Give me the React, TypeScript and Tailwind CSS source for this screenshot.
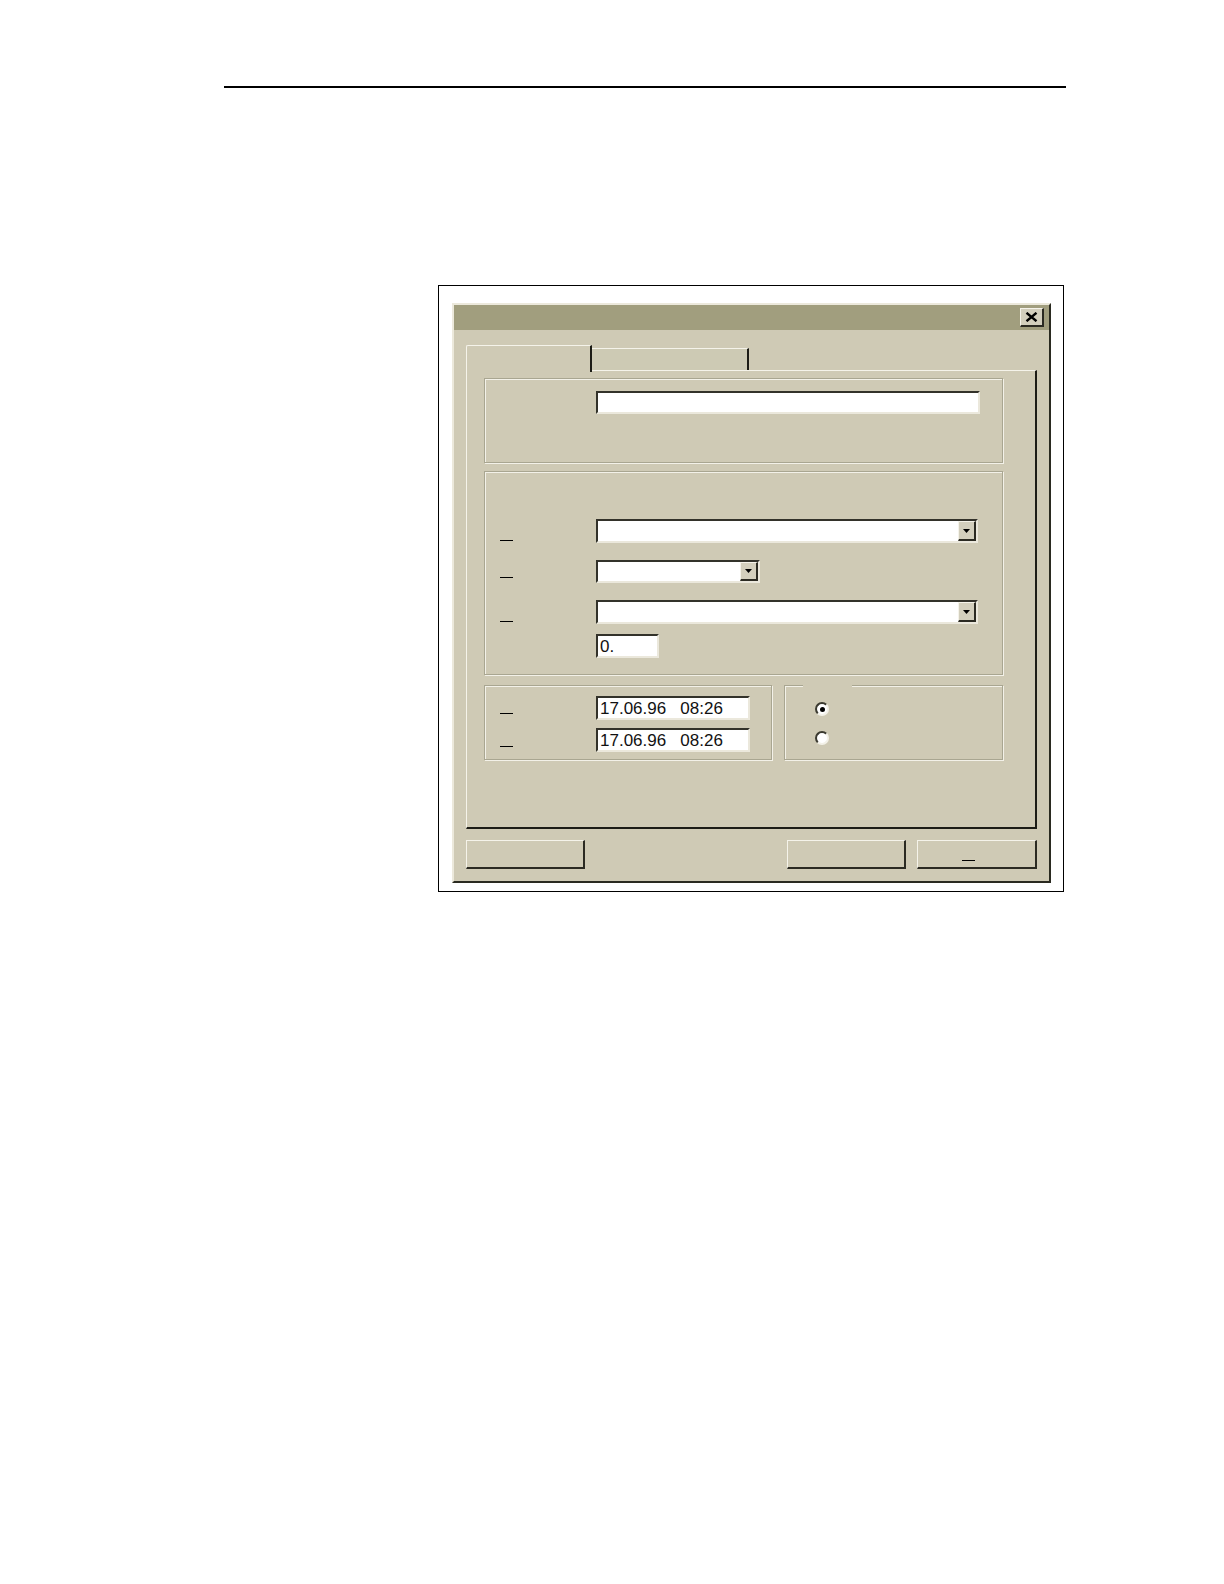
import React from "react";

const sunken =
  "bg-white border-2 border-t-[#33322a] border-l-[#33322a] border-b-[#ebe8dc] border-r-[#ebe8dc]";
const raised =
  "border-t border-l border-t-[#f5f3ea] border-l-[#f5f3ea] border-r-2 border-b-2 border-r-[#2b2a22] border-b-[#2b2a22]";
const etched =
  "border border-[#a9a691] shadow-[inset_1px_1px_0_#f3f1e8,1px_1px_0_#f3f1e8]";

function Underscore() {
  return <div className="w-[13px] h-[1px] bg-black" />;
}

function Combo({ w, h }: { w: string; h: string }) {
  return (
    <div className={`${sunken} ${w} ${h} flex justify-end`}>
      <div
        className={`w-[18px] h-full bg-[#d3cfbd] ${raised} flex items-center justify-center`}
      >
        <svg width="7" height="4" viewBox="0 0 7 4">
          <path d="M0 0H7L3.5 4Z" fill="#000" />
        </svg>
      </div>
    </div>
  );
}

function Field({ w, h, text }: { w: string; h: string; text?: string }) {
  return (
    <div
      className={`${sunken} ${w} ${h} flex items-center pl-[2px] pt-[1px] text-[17px] leading-none text-[#111] whitespace-pre`}
    >
      {text}
    </div>
  );
}

function Radio({ checked }: { checked?: boolean }) {
  return (
    <div className="w-[14px] h-[14px] rounded-full bg-white border-2 border-t-[#3a392f] border-l-[#3a392f] border-b-[#f3f1e8] border-r-[#f3f1e8] flex items-center justify-center">
      {checked && <div className="w-[5px] h-[5px] rounded-full bg-black" />}
    </div>
  );
}

export default function App() {
  return (
    <div
      className="w-[1224px] h-[1584px] bg-white overflow-hidden"
      style={{ fontFamily: '"Liberation Sans", Arial, sans-serif' }}
    >
      <div className="pt-[86px] pl-[224px]">
        <div className="w-[842px] h-[2px] bg-black" />
      </div>

      <div className="ml-[438px] mt-[197px] w-[626px] h-[607px] border border-black pl-[13px] pt-[17px]">
        {/* dialog */}
        <div className="w-[599px] h-[580px] bg-[#cfcab5] border-2 border-t-[#ece9dc] border-l-[#ece9dc] border-r-[#2a2a20] border-b-[#2a2a20] flex flex-col">
          {/* title bar */}
          <div className="h-[25px] bg-[#a19e7e] flex items-center justify-end pr-[5px]">
            <div
              className={`w-[24px] h-[19px] bg-[#d3cfbd] ${raised} flex items-center justify-center`}
            >
              <svg width="13" height="10" viewBox="0 0 13 10">
                <path
                  d="M1.5 0.8L11.5 9.2M11.5 0.8L1.5 9.2"
                  stroke="#000"
                  strokeWidth="2.4"
                />
              </svg>
            </div>
          </div>

          <div className="px-[12px] pt-[15px] flex flex-col">
            {/* tabs */}
            <div className="flex items-end h-[25px]">
              <div className="relative z-10 -mb-[2px] w-[126px] h-[27px] bg-[#cfcab5] border-t border-l border-t-[#f5f3ea] border-l-[#f5f3ea] border-r-2 border-r-[#1c1c16] rounded-tl-[2px]" />
              <div className="w-[157px] h-[22px] bg-[#cdcab4] border-t border-t-[#f5f3ea] border-r-2 border-r-[#1c1c16]" />
            </div>

            {/* panel */}
            <div className="w-[571px] h-[459px] border-t border-l border-t-[#f5f3ea] border-l-[#f5f3ea] border-r-2 border-b-2 border-r-[#1c1c16] border-b-[#1c1c16] px-[17px] pt-[7px] flex flex-col">
              {/* group 1 */}
              <div className={`${etched} w-[519px] h-[85px] pl-[111px] pt-[12px]`}>
                <Field w="w-[384px]" h="h-[23px]" />
              </div>

              {/* group 2 */}
              <div className={`${etched} mt-[8px] w-[519px] h-[204px] pt-[47px] flex flex-col`}>
                <div className="flex items-end">
                  <div className="w-[111px] pl-[15px] pb-[2px]">
                    <Underscore />
                  </div>
                  <Combo w="w-[382px]" h="h-[24px]" />
                </div>
                <div className="flex items-end mt-[17px]">
                  <div className="w-[111px] pl-[15px] pb-[5px]">
                    <Underscore />
                  </div>
                  <Combo w="w-[164px]" h="h-[23px]" />
                </div>
                <div className="flex items-end mt-[17px]">
                  <div className="w-[111px] pl-[15px] pb-[2px]">
                    <Underscore />
                  </div>
                  <Combo w="w-[382px]" h="h-[24px]" />
                </div>
                <div className="flex items-end mt-[10px] pl-[111px]">
                  <Field w="w-[63px]" h="h-[24px]" text="0." />
                </div>
              </div>

              {/* bottom groups */}
              <div className="mt-[10px] flex gap-[12px]">
                <div className={`${etched} w-[288px] h-[75px] pt-[10px] flex flex-col`}>
                  <div className="flex items-end">
                    <div className="w-[111px] pl-[15px] pb-[6px]">
                      <Underscore />
                    </div>
                    <Field w="w-[154px]" h="h-[24px]" text="17.06.96   08:26" />
                  </div>
                  <div className="flex items-end mt-[8px]">
                    <div className="w-[111px] pl-[15px] pb-[5px]">
                      <Underscore />
                    </div>
                    <Field w="w-[154px]" h="h-[24px]" text="17.06.96   08:26" />
                  </div>
                </div>
                <div className={`${etched} relative w-[219px] h-[75px] pl-[30px] pt-[16px] flex flex-col gap-[15px]`}>
                  <div className="absolute -top-[2px] left-[18px] w-[49px] h-[4px] bg-[#cfcab5]" />
                  <Radio checked />
                  <Radio />
                </div>
              </div>
            </div>

            {/* buttons */}
            <div className="mt-[11px] flex">
              <div className={`w-[119px] h-[29px] ${raised}`} />
              <div className={`ml-auto w-[119px] h-[29px] ${raised}`} />
              <div className={`ml-[11px] w-[120px] h-[29px] ${raised} flex items-end pl-[44px] pb-[6px]`}>
                <Underscore />
              </div>
            </div>
          </div>
        </div>
      </div>
    </div>
  );
}
